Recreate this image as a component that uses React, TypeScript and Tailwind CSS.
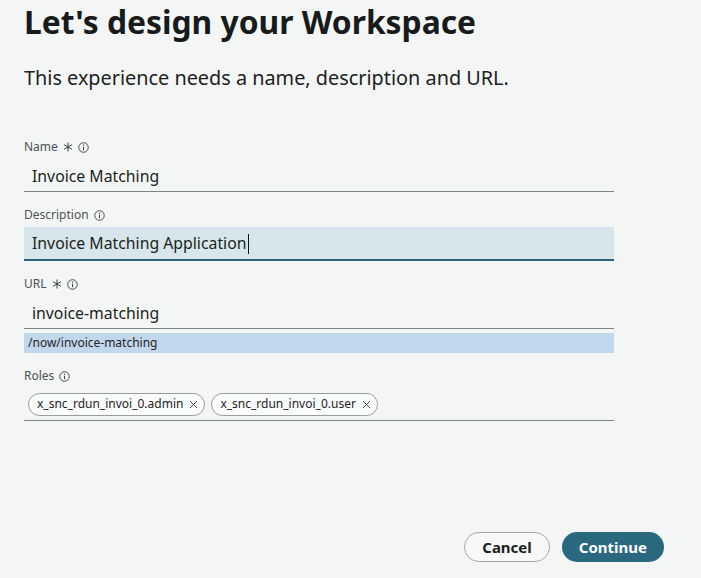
import { X } from "lucide-react";

function InfoIcon() {
    return (
        <svg width="11" height="11" viewBox="0 0 12 12" fill="none" className="inline-block">
            <circle cx="6" cy="6" r="5.2" stroke="#3a4042" strokeWidth="1" />
            <line x1="6" y1="5.2" x2="6" y2="9" stroke="#3a4042" strokeWidth="1.1" />
            <circle cx="6" cy="3.5" r="0.7" fill="#3a4042" />
        </svg>
    );
}

function RequiredMark() {
    return (
        <svg width="10" height="10" viewBox="0 0 10 10" fill="none" className="inline-block">
            <line x1="5" y1="0.5" x2="5" y2="9.5" stroke="#3a4042" strokeWidth="1" />
            <line x1="1.1" y1="2.75" x2="8.9" y2="7.25" stroke="#3a4042" strokeWidth="1" />
            <line x1="1.1" y1="7.25" x2="8.9" y2="2.75" stroke="#3a4042" strokeWidth="1" />
        </svg>
    );
}

function Label({ text, required }: { text: string; required?: boolean }) {
    return (
        <div className="flex items-center gap-[5px] h-4 mb-1 text-[12px] leading-4 text-[#4c5355]">
            <span>{text}</span>
            {required && <RequiredMark />}
            <InfoIcon />
        </div>
    );
}

function Chip({ label }: { label: string }) {
    return (
        <div className="flex items-center h-[23px] pl-2 pr-[4px] gap-[4px] rounded-full border border-[#979ea0] bg-[#fafbfb] text-[12px] text-[#1f2426]">
            <span>{label}</span>
            <X size={13} strokeWidth={1.5} className="text-[#2b3032]" />
        </div>
    );
}

export default function App() {
    return (
        <div className="w-full h-[578px] bg-[#f4f6f5] flex flex-col text-[#1b1f20]" style={{ fontFamily: '"Noto Sans", "Open Sans", sans-serif' }}>
            <div className="pl-6 pt-[2px] w-[614px]">
                <h1 className="text-[31.8px] leading-10 font-bold text-[#181b1c]">Let's design your Workspace</h1>
                <p className="mt-[22px] text-[19.85px] leading-7 text-[#1d2122]">This experience needs a name, description and URL.</p>

                <div className="mt-[47px] flex flex-col gap-[15px]">
                    {/* Name */}
                    <div>
                        <Label text="Name" required />
                        <div className="h-[33px] flex items-center px-2 pt-[3px] border-b border-[#7d8587] text-[15.8px]">
                            Invoice Matching
                        </div>
                    </div>

                    {/* Description */}
                    <div>
                        <Label text="Description" />
                        <div className="h-[34px] mt-[1px] flex items-center px-2 pt-[2px] bg-[#d7e6eb] border-b-2 border-[#2b6479] text-[15.8px]">
                            Invoice Matching Application
                            <span className="w-px h-[20px] bg-[#111] ml-px" />
                        </div>
                    </div>

                    {/* URL */}
                    <div>
                        <Label text="URL" required />
                        <div className="h-[33px] flex items-center px-2 pt-[3px] border-b border-[#7d8587] text-[15.8px]">
                            invoice-matching
                        </div>
                        <div className="mt-1 h-5 flex items-center px-1 bg-[#c1d7ec] text-[12px] text-[#1f2426] rounded-[1px]">
                            /now/invoice-matching
                        </div>
                    </div>

                    {/* Roles */}
                    <div>
                        <Label text="Roles" />
                        <div className="h-[33px] flex items-center gap-[6px] px-1 border-b border-[#7d8587]">
                            <Chip label="x_snc_rdun_invoi_0.admin" />
                            <Chip label="x_snc_rdun_invoi_0.user" />
                        </div>
                    </div>
                </div>
            </div>

            <div className="mt-auto flex justify-end gap-3 pr-[37px] pb-4">
                <button className="h-[30px] px-[17px] rounded-full border border-[#a3a9ab] bg-[#f7f8f8] text-[15px] font-bold text-[#1b1f20]">
                    Cancel
                </button>
                <button className="h-[30px] px-[17px] rounded-full bg-[#2a6880] text-[15px] font-bold text-white">
                    Continue
                </button>
            </div>
        </div>
    );
}
